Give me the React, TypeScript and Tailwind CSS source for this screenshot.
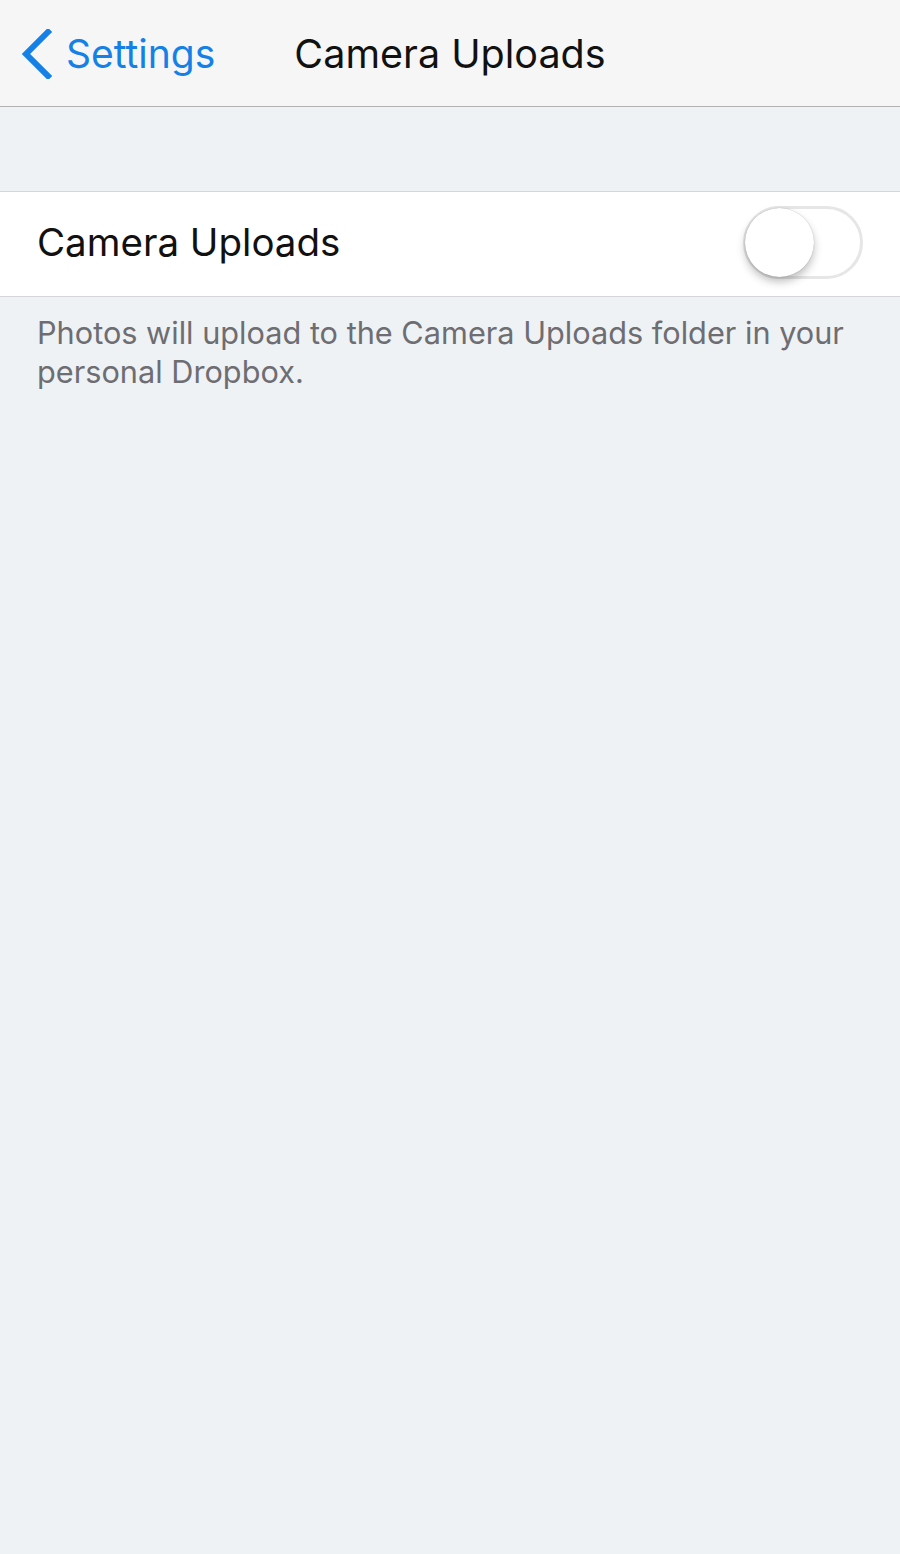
import React from "react";

export default function App() {
  return (
    <div className="w-[900px] h-[1554px] bg-[#eff2f5] flex flex-col" style={{ fontFamily: "Inter, 'Noto Sans', sans-serif" }}>
      <div className="h-[107px] bg-[#f6f6f7] border-b border-[#b2b2b2] relative flex items-center shrink-0">
        <div className="flex items-center pl-[20px] gap-[14px] text-[#1581e6]">
          <svg width="32" height="50" viewBox="0 0 32 50" className="mt-[1px]">
            <path d="M28 3 L6 25 L28 47" fill="none" stroke="#1581e6" strokeWidth="6" strokeLinecap="square" strokeLinejoin="miter" />
          </svg>
          <span className="text-[39px] leading-none">Settings</span>
        </div>
        <div className="absolute left-0 right-0 top-0 bottom-0 flex items-center justify-center pointer-events-none pt-[3px]">
          <span className="text-[39.5px] text-[#111] leading-none">Camera Uploads</span>
        </div>
      </div>
      <div className="h-[84px] shrink-0" />
      <div className="h-[106px] bg-white border-y border-[#d6d6da] flex items-center justify-between pl-[37px] pr-[37px] pb-[4px] shrink-0">
        <span className="text-[38.5px] text-[#111] leading-none">Camera Uploads</span>
        <div className="w-[120px] h-[73px] rounded-full border-[3px] border-[#e6e6e6] bg-white relative">
          <div className="absolute left-[-1px] top-[-1px] w-[69px] h-[69px] rounded-full bg-white shadow-[0_5px_8px_rgba(0,0,0,0.25),0_0_1px_rgba(0,0,0,0.3)]" />
        </div>
      </div>
      <div className="pl-[37px] pr-[30px] pt-[16px] text-[30.7px] leading-[39px] text-[#6d6d72]">
        Photos will upload to the Camera Uploads folder in your personal Dropbox.
      </div>
    </div>
  );
}
